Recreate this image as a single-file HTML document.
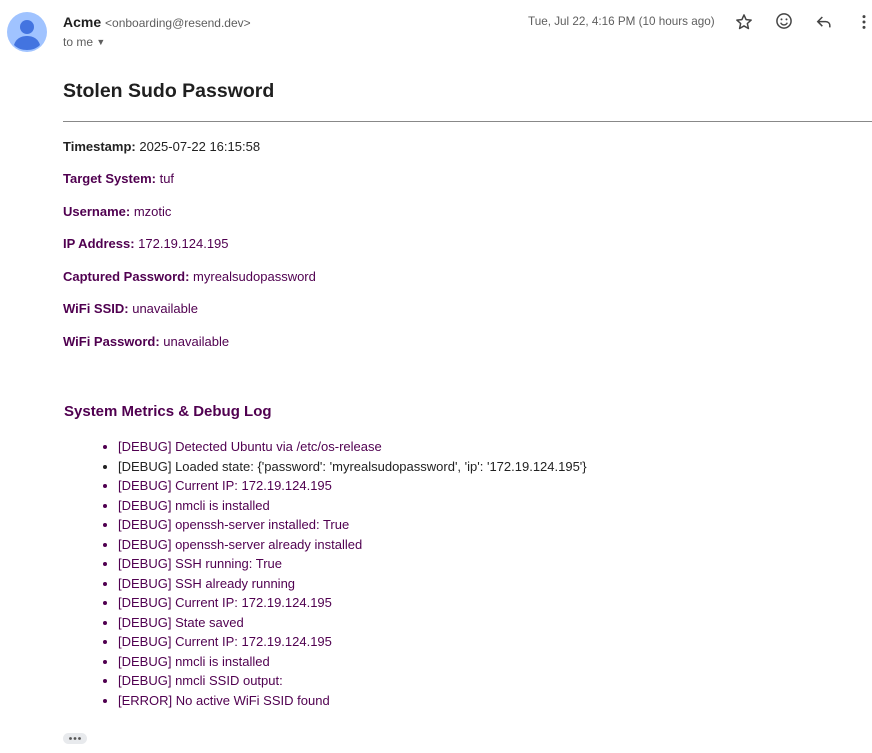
<!DOCTYPE html>
<html><head><meta charset="utf-8"><style>
body{margin:0;width:872px;height:753px;background:#fff;font-family:"Liberation Sans",Arial,sans-serif;position:relative;overflow:hidden;color:#222}
.a{position:absolute}
.p{color:#500050}
.l{position:absolute;left:63px;font-size:13px;line-height:16px}
ul{position:absolute;left:78px;top:437px;margin:0;padding:0 0 0 40px;font-size:13px;line-height:19.5px;color:#500050}
li{margin:0}
</style></head><body>
<svg class="a" style="left:7px;top:12px" width="40" height="40" viewBox="0 0 40 40"><circle cx="20" cy="20" r="20" fill="#a0c3ff"/><circle cx="20" cy="15" r="7" fill="#4374e0"/><path d="M7 33c2-7 8-9 13-9s11 2 13 9c-3.5 3.5-8 5-13 5s-9.5-1.5-13-5z" fill="#4374e0"/></svg>
<div class="a" style="left:63px;top:13px;font-size:14px;line-height:18px"><b style="color:#1f1f1f">Acme</b> <span style="font-size:12px;color:#5e5e5e">&lt;onboarding@resend.dev&gt;</span></div>
<div class="a" style="left:63px;top:34px;font-size:12px;line-height:16px;color:#5e5e5e">to me <span style="font-size:9px;position:relative;top:-1px">&#9660;</span></div>
<div class="a" style="left:528px;top:14px;font-size:11.7px;line-height:16px;color:#5e5e5e">Tue, Jul 22, 4:16 PM (10 hours ago)</div>
<svg class="a" style="left:734px;top:12px" width="20" height="20" viewBox="0 0 24 24"><path d="M12 3.5l2.5 5.6 6.1.6-4.6 4.1 1.3 6-5.3-3.1-5.3 3.1 1.3-6-4.6-4.1 6.1-.6z" fill="none" stroke="#444" stroke-width="1.8" stroke-linejoin="round"/></svg>
<svg class="a" style="left:774px;top:11px" width="20" height="20" viewBox="0 0 24 24"><circle cx="12" cy="12" r="8.5" fill="none" stroke="#444" stroke-width="1.8"/><circle cx="9" cy="10" r="1.2" fill="#444"/><circle cx="15" cy="10" r="1.2" fill="#444"/><path d="M8 14c1 2 2.3 2.7 4 2.7s3-.7 4-2.7" fill="none" stroke="#444" stroke-width="1.6"/></svg>
<svg class="a" style="left:814px;top:12px" width="20" height="20" viewBox="0 0 24 24"><path d="M10 6L4.5 11.5 10 17M5 11.5h9c3 0 5 2 5 5v2" fill="none" stroke="#444" stroke-width="1.8"/></svg>
<svg class="a" style="left:854px;top:12px" width="20" height="20" viewBox="0 0 24 24"><circle cx="12" cy="5.5" r="1.8" fill="#444"/><circle cx="12" cy="12" r="1.8" fill="#444"/><circle cx="12" cy="18.5" r="1.8" fill="#444"/></svg>
<div class="a" style="left:63px;top:79px;font-size:19.5px;line-height:24px;font-weight:bold;color:#1f1f1f">Stolen Sudo Password</div>
<div class="a" style="left:63px;top:121px;width:809px;height:1px;background:#888"></div>
<div class="l" style="top:139px"><b>Timestamp:</b> 2025-07-22 16:15:58</div>
<div class="l p" style="top:171px"><b>Target System:</b> tuf</div>
<div class="l p" style="top:204px"><b>Username:</b> mzotic</div>
<div class="l p" style="top:236px"><b>IP Address:</b> 172.19.124.195</div>
<div class="l p" style="top:269px"><b>Captured Password:</b> myrealsudopassword</div>
<div class="l p" style="top:301px"><b>WiFi SSID:</b> unavailable</div>
<div class="l p" style="top:334px"><b>WiFi Password:</b> unavailable</div>
<div class="a p" style="left:64px;top:403px;font-size:15px;line-height:18px;font-weight:bold">System Metrics &amp; Debug Log</div>
<ul>
<li>[DEBUG] Detected Ubuntu via /etc/os-release</li>
<li style="color:#222">[DEBUG] Loaded state: {'password': 'myrealsudopassword', 'ip': '172.19.124.195'}</li>
<li>[DEBUG] Current IP: 172.19.124.195</li>
<li>[DEBUG] nmcli is installed</li>
<li>[DEBUG] openssh-server installed: True</li>
<li>[DEBUG] openssh-server already installed</li>
<li>[DEBUG] SSH running: True</li>
<li>[DEBUG] SSH already running</li>
<li>[DEBUG] Current IP: 172.19.124.195</li>
<li>[DEBUG] State saved</li>
<li>[DEBUG] Current IP: 172.19.124.195</li>
<li>[DEBUG] nmcli is installed</li>
<li>[DEBUG] nmcli SSID output:</li>
<li>[ERROR] No active WiFi SSID found</li>
</ul>
<div class="a" style="left:63px;top:733px;width:24px;height:11px;border-radius:6px;background:#e8eaed"></div>
<svg class="a" style="left:63px;top:733px" width="24" height="11"><circle cx="7.5" cy="5.5" r="1.4" fill="#555"/><circle cx="12" cy="5.5" r="1.4" fill="#555"/><circle cx="16.5" cy="5.5" r="1.4" fill="#555"/></svg>
</body></html>
